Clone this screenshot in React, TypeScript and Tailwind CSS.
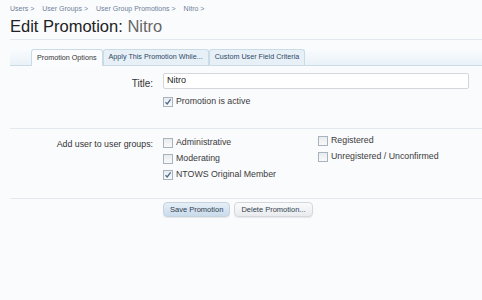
import React from "react";

const font = { fontFamily: '"Liberation Sans", Arial, sans-serif' };

function Check({ checked }: { checked?: boolean }) {
  return (
    <span className="inline-flex h-[10px] w-[10px] items-center justify-center border border-[#a9b3bd] bg-gradient-to-b from-[#e9ecef] to-[#f8f9fa]">
      {checked && (
        <svg width="8" height="8" viewBox="0 0 8 8">
          <path d="M1.5 4.2 L3.2 6 L6.6 1.4" stroke="#4b6a91" strokeWidth="1.3" fill="none" />
        </svg>
      )}
    </span>
  );
}

function CheckRow({ label, checked }: { label: string; checked?: boolean }) {
  return (
    <div className="flex h-[16px] items-center gap-[3px] text-[8.8px] text-[#3a3a3a]">
      <Check checked={checked} />
      <span>{label}</span>
    </div>
  );
}

export default function App() {
  return (
    <div className="min-h-[300px] w-[482px] bg-[#fafbfd] pl-[10px] text-[#333]" style={font}>
      <div className="flex gap-[8px] pt-[4px] text-[7px] leading-[10px] text-[#6f7f99]">
        <span>Users &gt;</span>
        <span>User Groups &gt;</span>
        <span>User Group Promotions &gt;</span>
        <span>Nitro &gt;</span>
      </div>
      <h1 className="mt-[2px] text-[16.5px] leading-[20px] text-[#222]">
        Edit Promotion: <span className="text-[#666]">Nitro</span>
      </h1>
      <div className="mt-[3px] border-t border-[#e4e9ef]" />

      <div className="mt-[9px] flex h-[17px] items-end border-b border-[#c9dbe7] bg-gradient-to-b from-[#fafcfe] to-[#e9f2f8] pl-[21px] text-[7.2px]">
        <div className="-mb-px flex h-[17px] items-center rounded-t-[3px] border border-b-0 border-[#c9dbe7] bg-[#fbfcfe] px-[5px] text-[#333]">
          Promotion Options
        </div>
        <div className="flex h-[16px] items-center rounded-t-[3px] border border-b-0 border-[#c9dbe7] bg-[#e6f0f6] px-[5px] text-[#2f4866]">
          Apply This Promotion While...
        </div>
        <div className="flex h-[16px] items-center rounded-t-[3px] border border-b-0 border-[#c9dbe7] bg-[#e6f0f6] px-[5px] text-[#2f4866]">
          Custom User Field Criteria
        </div>
      </div>

      <div className="flex pt-[7px]">
        <div className="w-[153px] pt-[3px] pr-[10px] text-right text-[10px]">Title:</div>
        <div className="flex-1 pr-[13px]">
          <div className="flex h-[16px] items-center rounded-[2px] border border-[#d3d6da] bg-white pl-[3px] text-[9px] text-[#222]">
            Nitro
          </div>
          <div className="mt-[5px]">
            <CheckRow label="Promotion is active" checked />
          </div>
        </div>
      </div>

      <div className="mt-[18px] border-t border-[#e4e9ef]" />

      <div className="flex pt-[6px]">
        <div className="w-[153px] pt-[3px] pr-[10px] text-right text-[8.8px]">Add user to user groups:</div>
        <div className="grid flex-1 grid-cols-[155px_1fr]">
          <div>
            <CheckRow label="Administrative" />
            <CheckRow label="Moderating" />
            <CheckRow label="NTOWS Original Member" checked />
          </div>
          <div className="-mt-[2px]">
            <CheckRow label="Registered" />
            <CheckRow label="Unregistered / Unconfirmed" />
          </div>
        </div>
      </div>

      <div className="mt-[15px] border-t border-[#e4e9ef]" />

      <div className="flex gap-[4px] pl-[153px] pt-[3px] text-[7.5px]">
        <button className="h-[15px] rounded-[4px] border border-[#c6d3df] bg-gradient-to-b from-[#e6eff7] to-[#c9dbeb] px-[6px] text-[#2f3e50] shadow-[0_1px_1px_rgba(0,0,0,0.08)]">
          Save Promotion
        </button>
        <button className="h-[15px] rounded-[4px] border border-[#d4d8dc] bg-gradient-to-b from-[#fbfbfc] to-[#e8ebee] px-[6px] text-[#2f3e50] shadow-[0_1px_1px_rgba(0,0,0,0.08)]">
          Delete Promotion...
        </button>
      </div>
    </div>
  );
}
